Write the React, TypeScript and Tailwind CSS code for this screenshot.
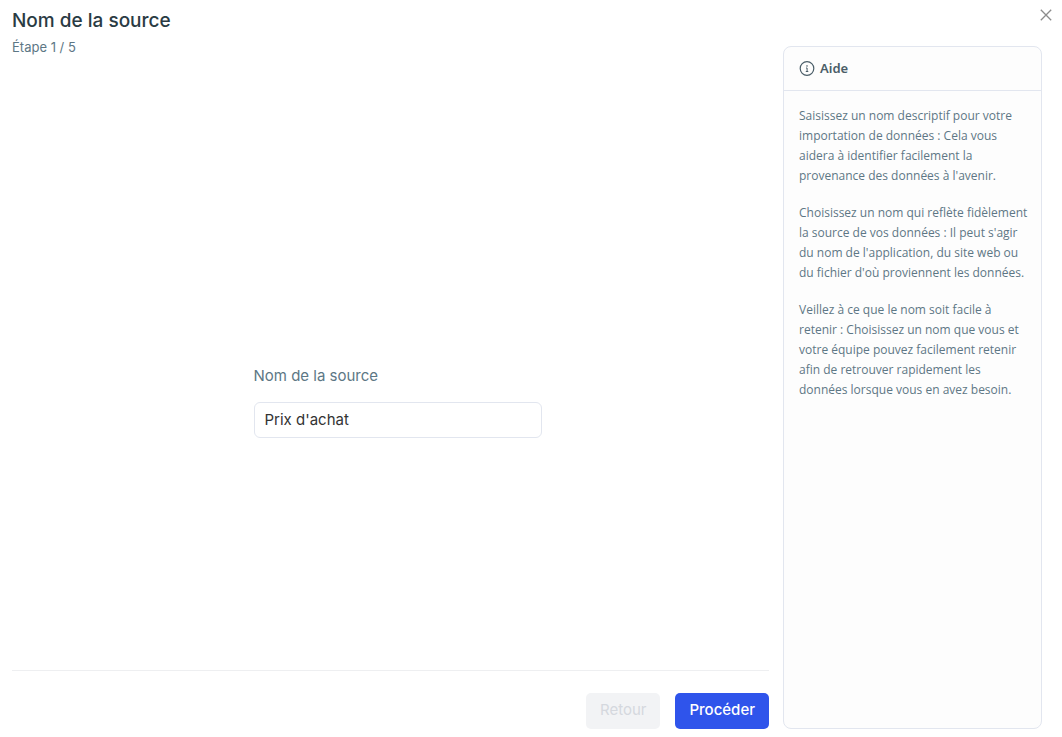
import { useState } from "react";

const helpParagraphs = [
  "Saisissez un nom descriptif pour votre importation de données : Cela vous aidera à identifier facilement la provenance des données à l'avenir.",
  "Choisissez un nom qui reflète fidèlement la source de vos données : Il peut s'agir du nom de l'application, du site web ou du fichier d'où proviennent les données.",
  "Veillez à ce que le nom soit facile à retenir : Choisissez un nom que vous et votre équipe pouvez facilement retenir afin de retrouver rapidement les données lorsque vous en avez besoin.",
];

function CloseIcon() {
  return (
    <svg className="size-3" viewBox="0 0 12 12" fill="none" stroke="currentColor" strokeWidth="1.3" aria-hidden="true">
      <path d="M0.8 0.8 11.2 11.2M11.2 0.8 0.8 11.2" />
    </svg>
  );
}

function InfoIcon() {
  return (
    <svg className="size-4" viewBox="0 0 16 16" fill="none" aria-hidden="true">
      <circle cx="8" cy="7.5" r="6.8" stroke="currentColor" strokeWidth="1.2" />
      <rect x="7.3" y="4.3" width="1.4" height="1.3" fill="currentColor" />
      <path d="M7 7H8.1V10.5M6.8 10.5H9.3" stroke="currentColor" strokeWidth="1" />
    </svg>
  );
}

function HelpPanel() {
  return (
    <aside className="mt-[46px] flex w-[259px] shrink-0 flex-col rounded-lg border border-[#e2e6ef] bg-[#fdfdfd]">
      <h2 className="flex h-11 items-center gap-[5px] border-b border-[#e2e6ef] px-[15px] font-['Noto_Sans',sans-serif] text-[13px] font-semibold text-[#4a5d68]">
        <InfoIcon />
        Aide
      </h2>
      <div className="flex flex-col gap-[17px] py-[15px] pr-3 pl-[15px] font-['Open_Sans',sans-serif] text-[12px] leading-5 text-[#5d7785]">
        {helpParagraphs.map((text) => (
          <p key={text}>{text}</p>
        ))}
      </div>
    </aside>
  );
}

export default function App() {
  const [name, setName] = useState("Prix d'achat");

  return (
    <div className="relative flex min-h-screen gap-[14px] bg-white pr-5 pb-2 pl-3 font-[Inter,sans-serif]">
      <main className="flex min-w-0 flex-1 flex-col">
        <header className="pt-[9px]">
          <h1 className="text-[19px] leading-6 font-medium text-[#2a3b43]">Nom de la source</h1>
          <p className="mt-1 text-[13px] leading-5 text-[#5d7785]">Étape 1 / 5</p>
        </header>
        <div className="flex flex-1 items-center justify-center pt-[77px] pl-[14px]">
          <div className="flex w-72 flex-col gap-4">
            <label htmlFor="source-name" className="text-[15px] leading-5 text-[#5d7785]">
              Nom de la source
            </label>
            <input
              id="source-name"
              type="text"
              value={name}
              onChange={(event) => setName(event.target.value)}
              className="h-9 w-full rounded-md border border-[#e2e6ef] bg-white px-[10px] pb-[2px] text-[15px] text-[#333333] outline-none focus:border-[#2f54eb]"
            />
          </div>
        </div>
        <footer className="flex justify-end gap-[15px] border-t border-[#eeeff1] pt-[22px]">
          <button type="button" disabled className="h-9 rounded-[5px] bg-[#f2f3f5] px-[14px] pb-[2px] text-[15px] text-[#d5d8de]">
            Retour
          </button>
          <button type="button" className="h-9 rounded-[5px] bg-[#2f54eb] px-[14px] pb-[2px] text-[15px] font-medium text-white">
            Procéder
          </button>
        </footer>
      </main>
      <HelpPanel />
      <button type="button" aria-label="Fermer" className="absolute top-[9px] right-[10px] text-[#8c8c8c]">
        <CloseIcon />
      </button>
    </div>
  );
}
